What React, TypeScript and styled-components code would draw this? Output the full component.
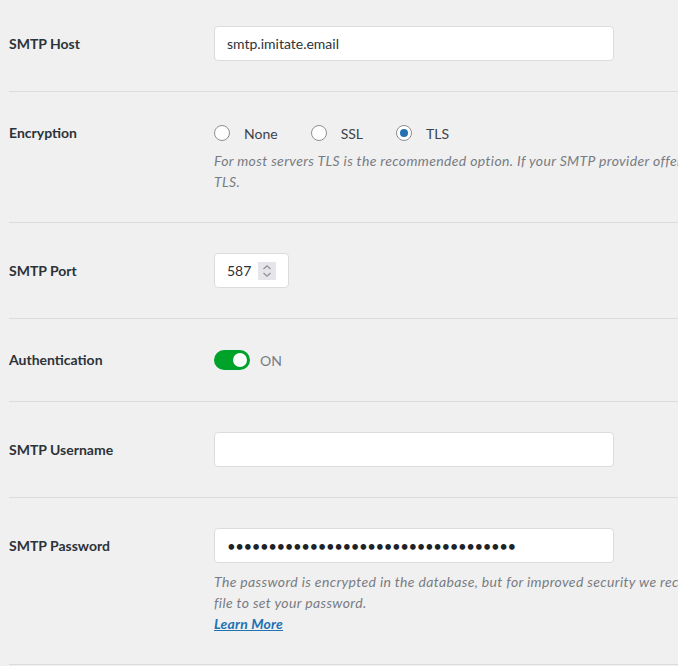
import React from 'react';
import styled, { createGlobalStyle } from 'styled-components';

const GlobalStyle = createGlobalStyle`
    html, body {
        margin: 0;
        padding: 0;
        background: #f0f0f1;
        overflow: hidden;
    }
    body {
        font-family: 'Lato', 'Liberation Sans', sans-serif;
        color: #3c434a;
    }
`

const Page = styled.div`
    margin-left: 9px;
    width: 1100px;
`

const Row = styled.div<{ $first?: boolean }>`
    display: grid;
    grid-template-columns: 205px 1fr;
    align-items: start;
    padding: ${(p) => (p.$first ? '26px' : '30px')} 0 30px 0;
    border-bottom: 1px solid #dcdcde;
`

const Label = styled.div<{ $lineH: number }>`
    font-size: 14px;
    font-weight: 700;
    color: #2c3338;
    line-height: ${(p) => p.$lineH}px;
`

const Field = styled.div`
    display: flex;
    flex-direction: column;
`

const TextInput = styled.input`
    box-sizing: border-box;
    width: 400px;
    height: 35px;
    padding: 0 12px;
    border: 1px solid #dcdcde;
    border-radius: 4px;
    background: #fff;
    font-family: 'Lato', sans-serif;
    font-size: 14px;
    color: #2c3338;
    outline: none;

    &[type='password'] {
        font-size: 15px;
        letter-spacing: -0.45px;
        color: #1d2327;
    }
`

const PortBox = styled.div`
    box-sizing: border-box;
    width: 75px;
    height: 35px;
    display: flex;
    align-items: center;
    padding: 0 12px;
    border: 1px solid #dcdcde;
    border-radius: 4px;
    background: #fff;
`

const PortInput = styled.input`
    width: 30px;
    border: none;
    padding: 0;
    outline: none;
    font-family: 'Lato', sans-serif;
    font-size: 14px;
    color: #2c3338;
    background: transparent;
`

const Spinner = styled.span`
    width: 18px;
    height: 18px;
    margin-left: 1px;
    background: #e6e6ea;
    display: flex;
    align-items: center;
    justify-content: center;
`

const RadioGroup = styled.div`
    display: flex;
    align-items: center;
    height: 22px;
    gap: 33px;
`

const RadioLabel = styled.label`
    display: flex;
    align-items: center;
    gap: 14px;
    font-size: 14px;
    color: #3c434a;
`

const RadioDot = styled.span<{ $checked?: boolean }>`
    box-sizing: border-box;
    width: 16px;
    height: 16px;
    border-radius: 50%;
    border: 1px solid #8c8f94;
    background: #fff;
    display: flex;
    align-items: center;
    justify-content: center;

    &::after {
        content: '';
        width: 8px;
        height: 8px;
        border-radius: 50%;
        background: ${(p) => (p.$checked ? '#2271b1' : 'transparent')};
    }
`

const Desc = styled.p<{ $top: number }>`
    margin: ${(p) => p.$top}px 0 0 0;
    font-size: 14px;
    font-style: italic;
    letter-spacing: 0.35px;
    line-height: 21px;
    color: #787c82;
    white-space: nowrap;
`

const MoreLink = styled.a`
    color: #2271b1;
    font-weight: 700;
    letter-spacing: 0.2px;
    text-decoration: underline;
`

const ToggleLine = styled.div`
    display: flex;
    align-items: center;
    height: 22px;
    gap: 10px;
    font-size: 14px;
    color: #787c82;
`

const Toggle = styled.span<{ $on?: boolean }>`
    box-sizing: border-box;
    width: 36px;
    height: 20px;
    border-radius: 10px;
    background: ${(p) => (p.$on ? '#00a32a' : '#dcdcde')};
    display: flex;
    align-items: center;
    justify-content: ${(p) => (p.$on ? 'flex-end' : 'flex-start')};
    padding: 0 3px;

    &::after {
        content: '';
        width: 14px;
        height: 14px;
        border-radius: 50%;
        background: #fff;
    }
`

function App() {
    return (
        <>
            <GlobalStyle />
            <Page>
                <Row $first>
                    <Label $lineH={35}>SMTP Host</Label>
                    <Field>
                        <TextInput type="text" defaultValue="smtp.imitate.email" />
                    </Field>
                </Row>

                <Row>
                    <Label $lineH={22}>Encryption</Label>
                    <Field>
                        <RadioGroup>
                            <RadioLabel><RadioDot />None</RadioLabel>
                            <RadioLabel><RadioDot />SSL</RadioLabel>
                            <RadioLabel><RadioDot $checked />TLS</RadioLabel>
                        </RadioGroup>
                        <Desc $top={6}>
                            For most servers TLS is the recommended option. If your SMTP provider offers both SSL and<br />
                            TLS.
                        </Desc>
                    </Field>
                </Row>

                <Row>
                    <Label $lineH={35}>SMTP Port</Label>
                    <Field>
                        <PortBox>
                            <PortInput type="text" defaultValue="587" />
                            <Spinner>
                                <svg width="10" height="14" viewBox="0 0 10 14" fill="none" stroke="#8c8f94" strokeWidth="1.2">
                                    <path d="M1.5 5 L5 1.8 L8.5 5" />
                                    <path d="M1.5 9 L5 12.2 L8.5 9" />
                                </svg>
                            </Spinner>
                        </PortBox>
                    </Field>
                </Row>

                <Row>
                    <Label $lineH={22}>Authentication</Label>
                    <Field>
                        <ToggleLine>
                            <Toggle $on />
                            ON
                        </ToggleLine>
                    </Field>
                </Row>

                <Row>
                    <Label $lineH={35}>SMTP Username</Label>
                    <Field>
                        <TextInput type="text" defaultValue="" />
                    </Field>
                </Row>

                <Row>
                    <Label $lineH={35}>SMTP Password</Label>
                    <Field>
                        <TextInput type="password" defaultValue="abcdefghijklmnopqrstuvwxyz123456789" />
                        <Desc $top={8}>
                            The password is encrypted in the database, but for improved security we recommend using your site's WordPress configuration<br />
                            file to set your password.<br />
                            <MoreLink href="#">Learn More</MoreLink>
                        </Desc>
                    </Field>
                </Row>
            </Page>
        </>
    )
}

export default App;
